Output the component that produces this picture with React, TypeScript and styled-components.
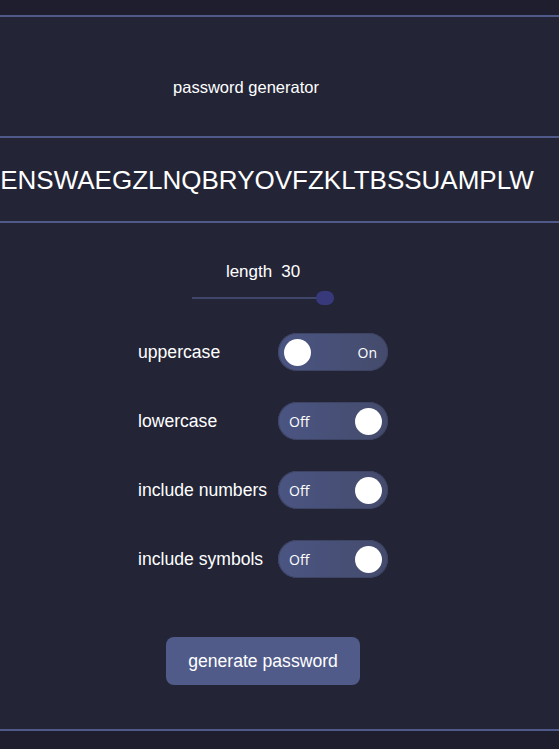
import React, { useState } from "react";
import styled, { createGlobalStyle } from "styled-components";

const Global = createGlobalStyle`
  html, body { margin: 0; padding: 0; background: #1e1e2e; }
  body { font-family: "Liberation Sans", Arial, sans-serif; color: #ffffff; overflow: hidden; }
`;

const Page = styled.div`
  padding-top: 15px;
  width: 559px;
`;

const Card = styled.main`
  background: #232537;
  border-top: 2px solid #4f5a8a;
  border-bottom: 2px solid #4f5a8a;
`;

const Header = styled.header`
  display: flex;
  justify-content: center;
  padding: 61px 67px 40px 0;
`;

const Title = styled.h1`
  margin: 0;
  font-size: 16.5px;
  line-height: 18px;
  font-weight: 400;
`;

const PasswordBox = styled.section`
  height: 83px;
  border-top: 2px solid #4f5a8a;
  border-bottom: 2px solid #4f5a8a;
  display: flex;
  align-items: center;
  justify-content: center;
  overflow: hidden;
  padding-right: 25px;
`;

const PasswordText = styled.div`
  font-size: 26px;
  line-height: 30px;
  white-space: nowrap;
  flex-shrink: 0;
`;

const Controls = styled.section`
  display: flex;
  flex-direction: column;
  align-items: center;
  padding: 39px 33px 44px 0;
`;

const LengthLabel = styled.div`
  display: flex;
  gap: 9px;
  font-size: 17px;
  line-height: 20px;
`;

const Range = styled.input`
  -webkit-appearance: none;
  appearance: none;
  margin: 9px 0 0 0;
  width: 142px;
  height: 14px;
  background: transparent;
  &::-webkit-slider-runnable-track {
    height: 2px;
    background: #40466b;
  }
  &::-webkit-slider-thumb {
    -webkit-appearance: none;
    width: 18px;
    height: 14px;
    border-radius: 7px;
    background: #38397a;
    margin-top: -6px;
  }
`;

const Options = styled.div`
  display: flex;
  flex-direction: column;
  gap: 31px;
  margin-top: 28px;
`;

const Row = styled.label`
  display: flex;
  align-items: center;
  width: 250px;
`;

const RowLabel = styled.span`
  width: 140px;
  font-size: 17.6px;
  line-height: 20px;
  white-space: nowrap;
`;

const Toggle = styled.button<{ $on: boolean }>`
  position: relative;
  width: 110px;
  height: 38px;
  border: none;
  border-radius: 19px;
  background: linear-gradient(90deg, #4b5582 0%, #444b6c 100%);
  box-shadow: inset 0 0 0 1px #3d4362;
  padding: 0 11px;
  display: flex;
  align-items: center;
  justify-content: ${(p) => (p.$on ? "flex-end" : "flex-start")};
  cursor: pointer;
  font-family: "Open Sans", "Liberation Sans", sans-serif;
  font-size: 14px;
  color: #ffffff;
`;

const Knob = styled.span<{ $on: boolean }>`
  position: absolute;
  top: 5.5px;
  ${(p) => (p.$on ? "left: 6px;" : "right: 6px;")}
  width: 27px;
  height: 27px;
  border-radius: 50%;
  background: #ffffff;
`;

const GenerateButton = styled.button`
  margin-top: 59px;
  width: 194px;
  height: 48px;
  border: none;
  border-radius: 8px;
  background: #505b8a;
  color: #ffffff;
  font-family: "Liberation Sans", Arial, sans-serif;
  font-size: 17.6px;
  cursor: pointer;
`;

const options = [
  { key: "upper", label: "uppercase", on: true },
  { key: "lower", label: "lowercase", on: false },
  { key: "numbers", label: "include numbers", on: false },
  { key: "symbols", label: "include symbols", on: false },
];

export default function App() {
  const [length, setLength] = useState(30);
  const [state, setState] = useState<Record<string, boolean>>(
    Object.fromEntries(options.map((o) => [o.key, o.on]))
  );
  return (
    <Page>
      <Global />
      <Card>
        <Header>
          <Title>password generator</Title>
        </Header>
        <PasswordBox>
          <PasswordText>ENSWAEGZLNQBRYOVFZKLTBSSUAMPLW</PasswordText>
        </PasswordBox>
        <Controls>
          <LengthLabel>
            <span>length</span>
            <span>{length}</span>
          </LengthLabel>
          <Range
            type="range"
            min={8}
            max={30}
            value={length}
            onChange={(e) => setLength(Number(e.target.value))}
          />
          <Options>
            {options.map((o) => (
              <Row key={o.key}>
                <RowLabel>{o.label}</RowLabel>
                <Toggle
                  $on={state[o.key]}
                  onClick={() => setState({ ...state, [o.key]: !state[o.key] })}
                >
                  <Knob $on={state[o.key]} />
                  {state[o.key] ? "On" : "Off"}
                </Toggle>
              </Row>
            ))}
          </Options>
          <GenerateButton>generate password</GenerateButton>
        </Controls>
      </Card>
    </Page>
  );
}
